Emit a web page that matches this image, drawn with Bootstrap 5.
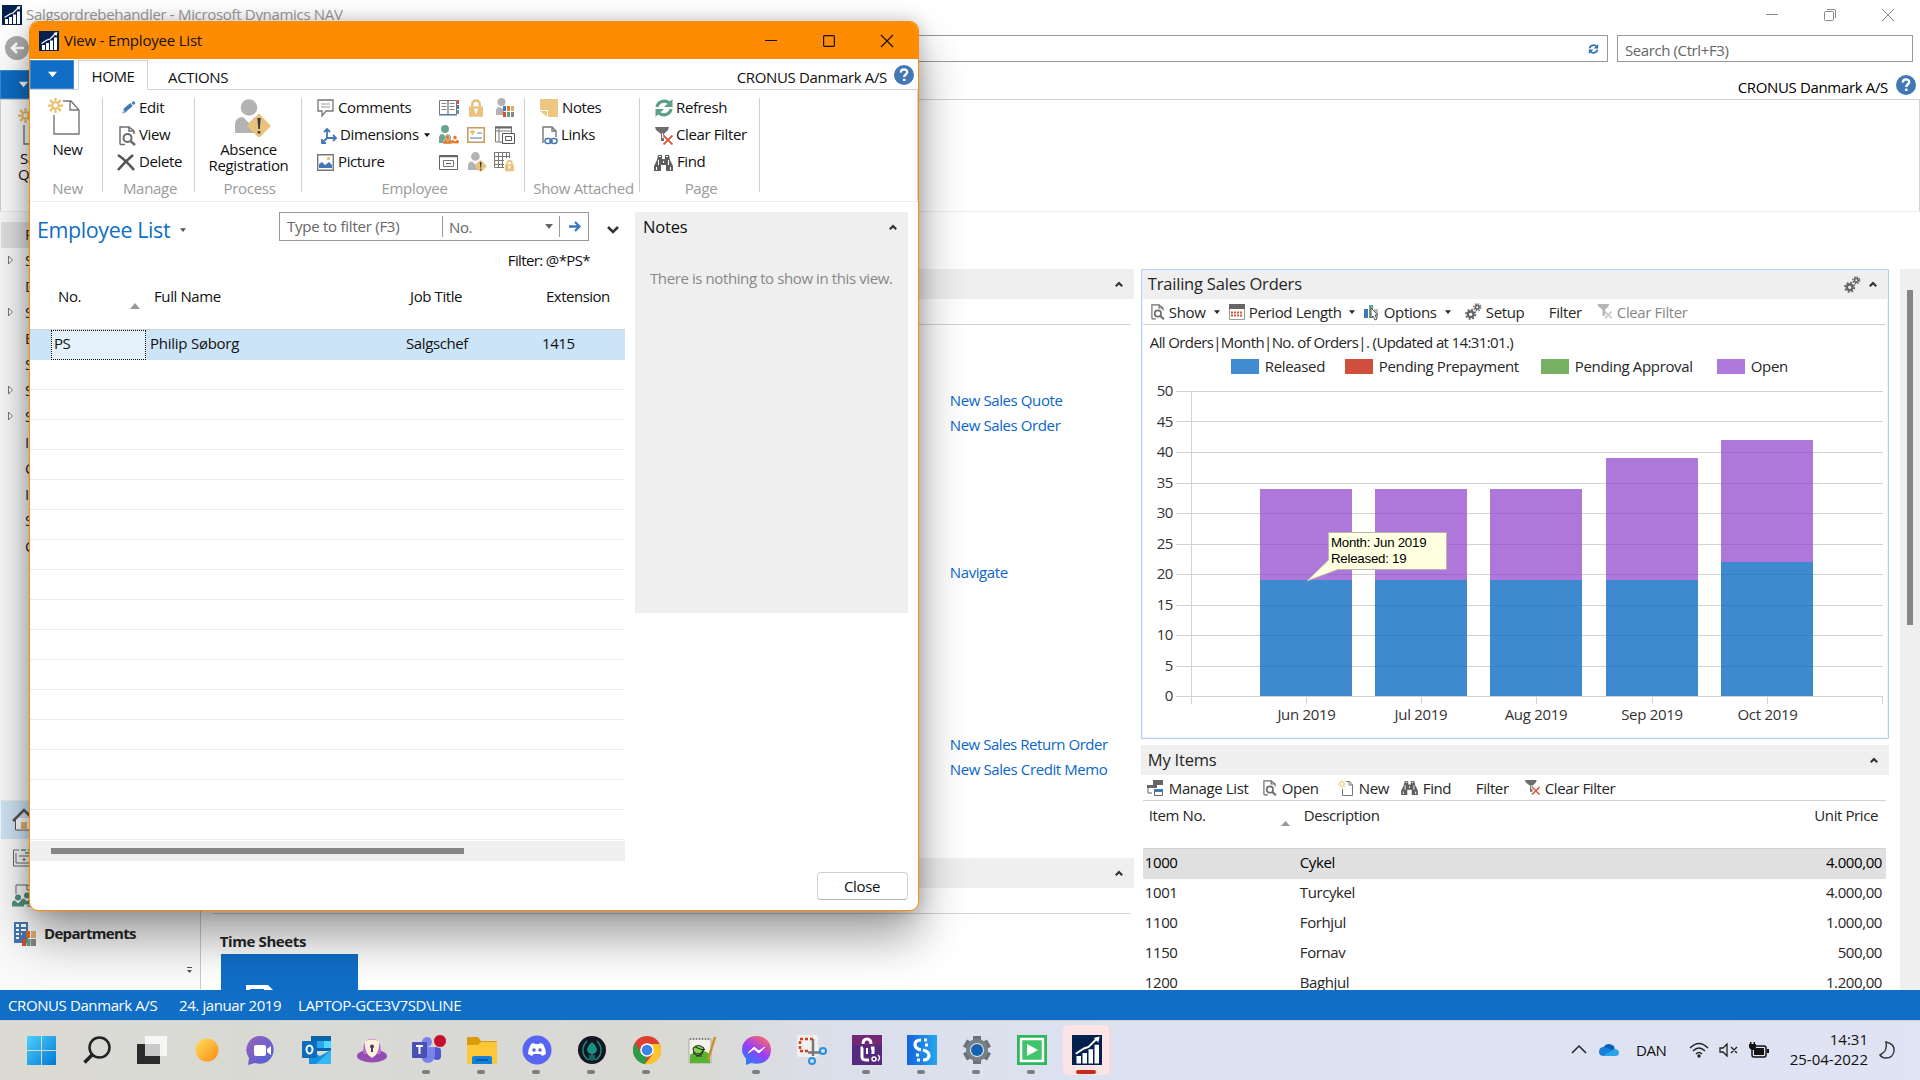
<!DOCTYPE html>
<html lang="en">
<head>
<meta charset="utf-8">
<meta name="viewport" content="width=device-width, initial-scale=1">
<title>Employee List</title>
<link href="https://cdn.jsdelivr.net/npm/bootstrap@5.3.0/dist/css/bootstrap.min.css" rel="stylesheet">
<script src="https://cdn.jsdelivr.net/npm/bootstrap@5.3.0/dist/js/bootstrap.bundle.min.js"></script>
<style>
:root{--nav:#106ec6;--line:#d2d2d2;--head:#efefef}
body{width:1920px;height:1080px;overflow:hidden;font-family:"Open Sans","Noto Sans",sans-serif;font-size:15px;letter-spacing:-.4px;line-height:20px;color:#262626;background:#fff}
svg{display:block;flex:none;overflow:visible}
span,a{white-space:nowrap}
a{color:#0a66cc;text-decoration:none}
.desk{height:990px;position:relative;overflow:hidden}
.mtitle{height:29px;padding:0 26px 0 2px;color:#999}
.mtitle>span,.dtitle>span{letter-spacing:-.32px;padding-bottom:2px}
.dtitle>span{letter-spacing:-.2px}
.wbtns{gap:46px}
.maddr{height:41px;padding:6px 7px 0 5px}
.addr{height:27px;border:1px solid #999;margin-left:6px;margin-right:9px;padding-right:8px}
.mfind{width:296px;height:27px;border:1px solid #999;padding:4px 0 0 7px;color:#666}
.mtabs{height:30px;border-bottom:1px solid var(--line);padding-right:4px}
.org{letter-spacing:-.34px}
.mtabs .org{padding-top:3px}
.filetab{background:var(--nav);border:1px solid #3b8ad6;outline:1px solid var(--nav);outline-offset:-3px;width:46px;height:29px}
.mrib{height:112px;border:1px solid var(--line);border-top:0;border-bottom-color:#eee;padding:2px 0 0 17px;color:#111}
.mrib div{width:24px;text-align:center;line-height:16px;margin:11px 0 0 -2px}
.mnav{width:201px;border-right:1px solid #c9c9c9;background:#fafafa;padding-top:10px;height:777px}
.nitem{height:26px;padding-left:7px;margin-left:1px;padding-bottom:2px}
.nitem svg{width:17px}
.nitem i{width:17px;flex:none}
.nitem.sel{background:#e1e1e1}
.nbig{height:38px;margin-left:1px;padding-left:12px;padding-bottom:1px}
.nbig.on{background:#cfe5f6}
.nbig span{letter-spacing:-.68px}
.nmore{height:36px}
.mid{padding:57px 11px 0 12px;width:940px;flex:none}
.midrule{height:26px;border-bottom:1px solid var(--line)}
.bar30{height:30px;background:var(--head)}
.mid .bar30{padding-right:11px;margin-right:-4px}
.part{width:749px;padding-top:57px}
.ptitle{font-size:16.5px;letter-spacing:-.2px}
.chartbox{height:470px;border:1px solid #b4cff5;box-shadow:inset 0 0 0 1px #eaf2fd}
.chead{height:28px;margin:1px 1px 0;background:var(--head);padding:0 10px 2px 5px}
.ptool{height:26px;display:grid;align-items:center;border-bottom:1px solid var(--line)}
.ptool>div{display:flex;align-items:center}
.ptool svg.ic{margin-right:4px}
.t-orders{grid-template-columns:79px 135px 101px 84px 48px 1fr;padding-left:7px;margin:0 2px 0 1px;letter-spacing:-.37px}
.t-items{grid-template-columns:115px 76px 63px 75px 49px 1fr;padding-left:4px;margin:0 3px 0 2px}
.t-items svg.ic{margin-right:5px}
.legend{height:15px;padding-left:89px}
.legend i{width:28px;height:15px;margin-right:6px}
.legend span{display:inline-block;letter-spacing:-.35px;padding-bottom:1px}
.ihead{height:48px;margin:0 3px 0 2px;padding:4px 8px 0 6px;border-bottom:1px solid var(--line)}
.irow{height:30px;padding:0 4px 4px 2px;margin:0 3px 0 2px}
.irow span:first-child{width:155px}
.vtrack{width:20px;background:var(--head);margin:57px 0 0 11px;padding:21px 0 0 7px}
.vthumb{width:6px;height:335px;background:#858585}
.status{height:30px;background:var(--nav);color:#fff;padding-left:8px;position:relative}
.task{height:60px;background:linear-gradient(90deg,#dbdad3 0,#d8d9d6 25%,#dad9d3 36%,#dbdfea 43%,#dce2f1 60%,#dfe3f3 100%);border-top:1px solid #ccd0d6;padding-left:14px;color:#111}
.app{width:55px;height:58px;position:relative}
.app.run:after{content:"";position:absolute;left:23px;top:49px;width:8px;height:4px;border-radius:2px;background:#7d7d7d}
.app.act:before{content:"";position:absolute;left:4px;top:4px;width:48px;height:50px;border-radius:5px;background:#fbe4e6;border-right:2px solid #f4d8da}
.app.act:after{left:17px;width:20px;background:#c42b1c}
.app svg{position:relative}
.clock{width:99px;line-height:20px;letter-spacing:0;padding-bottom:1px}
.dlg{position:absolute;left:29px;top:21px;width:890px;height:890px;border:1px solid #ff8c00;border-radius:9px;background:#fff;box-shadow:0 26px 48px rgba(0,0,0,.38),0 0 18px rgba(0,0,0,.2);overflow:hidden;color:#111}
.dtitle{height:37px;background:#ff8c00;padding:0 25px 0 9px}
.dtabs{height:31px;border-bottom:1px solid var(--line);padding-top:1px}
.dtabs>span{margin-top:7px}
.hometab{width:70px;height:30px;border:1px solid var(--line);border-bottom-color:#fff;margin-left:4px;padding-top:2px;letter-spacing:-.35px}
.drib{height:112px;border-bottom:1px solid #eee;border-right:1px solid var(--line);padding-top:8px}
.rg{position:relative;border-right:1px solid #cfcfcf;height:94px}
.rg .lab{position:absolute;left:3px;right:0;bottom:-6px;text-align:center;color:#9a9a9a;letter-spacing:-.3px}
.rtop{margin-top:-4px}
.rrow{height:27.400px;display:flex;align-items:center}
.rrow .icn{width:22px;flex:none;padding-top:1px}
.rrow>span{padding-bottom:2px;letter-spacing:-.38px}
.rgrid{display:grid;grid-template-columns:28px 29px 20px;grid-auto-rows:27.400px;align-items:center}
.efilter{width:310px;height:29px;border:1px solid #999;color:#666}
.efilter>div{height:21px;border-right:1px solid #999}
.lname{font-size:21.5px;line-height:36px;color:#106ec6;letter-spacing:-.4px}
.elist{width:595px;height:510px;background:repeating-linear-gradient(#fff 0 29px,#ebebeb 29px 30px)}
.ehead{height:49px;border-bottom:1px solid var(--line);width:595px;padding:5px 0 0 28px}
.erow{height:30px;background:#cce4f7}
.erow>span{padding-bottom:4px}
.ecell{width:95px;height:30px;border:1px dotted #111;background:#e4f1fa;padding:0 0 4px 2px;margin:0 1px 0 21px}
.hs{width:595px;height:20px;background:var(--head);padding:7px 0 0 21px;margin-top:1px}
.hs i{display:block;width:413px;height:6px;background:#858585}
.notes{width:273px;height:401px;background:var(--head);padding:5px 9px 0 8px}
.cbtn{width:91px;height:28px;border:1px solid #d0d0d0;border-bottom-color:#b5b5b5;border-radius:4px;background:#fff;padding:0 1px 1px 0;font-size:15px;line-height:20px;letter-spacing:-.35px;color:#111}
</style>
</head>
<body>
<svg width="0" height="0" class="position-absolute">
<defs>
<symbol id="nav" viewBox="0 0 20 20"><path fill="#04204f" d="M0 0h20v20H0z"/><path fill="#fff" d="M3 14h3v5H3zM7 12h3v7H7zM11 9.500h3V19h-3zM15 6.500h3V19h-3z"/><path d="M2.500 12.500 8 9l3-1 6-6" fill="none" stroke="#fff" stroke-width="1.300"/><path fill="#fff" d="m14.500 2 4-1-1 4z"/></symbol>
<symbol id="help" viewBox="0 0 20 20"><circle cx="10" cy="10" r="10" fill="#4478b4"/><path d="M6.800 7.500C6.800 3.300 13.400 3.500 13.200 7.300 13.100 9.300 10.200 9.300 10.200 12" fill="none" stroke="#fff" stroke-width="2.300"/><path fill="#fff" d="M9 13.700h2.500V16H9z"/></symbol>
<symbol id="dn" viewBox="0 0 8 5"><path d="M0 0h8L4 5z" fill="currentColor"/></symbol>
<symbol id="chev" viewBox="0 0 8 6"><path d="M.8 5.200 4 2l3.200 3.200" fill="none" stroke="#333" stroke-width="2.200"/></symbol>
<symbol id="view" viewBox="0 0 18 20"><path d="M2 18.500V1h9l5 4v3M11 1v4h5M2 18.500h5" fill="none" stroke="#6f6f6f" stroke-width="1.500"/><circle cx="9.500" cy="12" r="4" fill="none" stroke="#6a6a6a" stroke-width="2"/><path d="m12.500 15 4.500 4" stroke="#6a6a6a" stroke-width="2.500"/></symbol>
<symbol id="cf" viewBox="0 0 18 18"><path fill="#6d6d6d" d="M0 0h14l-1 3-4 4v7H6V7L1 3z"/><path fill="#fff" d="M7 6h1v5H7z"/><path d="m8.500 8.500 9 9m0-9-9 9" stroke="#fff" stroke-width="3.500"/><path d="m8.500 8.500 9 9m0-9-9 9" stroke="#d9573a" stroke-width="1.800"/></symbol>
<symbol id="cfg" viewBox="0 0 18 18"><path fill="#b5b5b5" d="M0 0h14l-1 3-4 4v7H6V7L1 3z"/><path d="m9 9 8 8m0-8-8 8" stroke="#c4c4c4" stroke-width="1.800"/></symbol>
<symbol id="find" viewBox="0 0 19 17"><path fill="#5f5f5f" d="M4 1h4v4h3V1h4l1 5 3 6v5h-7v-6H7v6H0v-5l3-6z"/><path fill="#fff" d="M5 2h2v1H5zM12 2h2v1h-2zM4 6h1v5H4zM14 6h1v5h-1zM2 13h1v3H2zM16 13h1v3h-1zM9 7h1v2H9z"/></symbol>
<symbol id="gears" viewBox="0 0 18 18"><g fill="none" stroke="#666"><circle cx="6" cy="12" r="3" stroke-width="2.400"/><circle cx="6" cy="12" r="4.900" stroke-width="2" stroke-dasharray="1.900 1.950"/><circle cx="13" cy="4.500" r="2" stroke-width="1.800"/><circle cx="13" cy="4.500" r="3.600" stroke-width="1.500" stroke-dasharray="1.500 1.330"/></g></symbol>
<symbol id="star" viewBox="0 0 16 16"><path d="M8 0v16M0 8h16M2.300 2.300l11.400 11.400M13.700 2.300 2.300 13.700" stroke="#ebc16c" stroke-width="2.400"/><circle cx="8" cy="8" r="3.200" fill="#fff" stroke="#ebc16c" stroke-width="1.800"/></symbol>
<symbol id="newdoc" viewBox="0 0 32 37"><path d="M6 17v19h25V12L23 3h-8" fill="none" stroke="#777" stroke-width="1.400"/><path d="M22 3v9h9" fill="none" stroke="#777" stroke-width="1.400"/><use href="#star" width="15" height="15"/></symbol>
<symbol id="newsm" viewBox="0 0 16 16"><path d="M4.500 9v6.500h10V5l-3-3.500H8M11 1.500V5h3.500" fill="none" stroke="#777"/><path d="M4 0v8M0 4h8M1.200 1.200l5.600 5.600M6.800 1.200 1.200 6.800" stroke="#ebc16c"/><circle cx="4" cy="4" r="1.300" fill="#fff"/></symbol>
<symbol id="absent" viewBox="0 0 36 38"><circle cx="14" cy="8.500" r="8.300" fill="#b3b3b3"/><path d="M0 34v-8c0-5 3-8 8-8l6 6 6-6c5 0 8 3 8 8v8z" fill="#b3b3b3"/><path d="M24 15.500 35 27 24 38 13 27z" fill="#ebc27d" stroke="#ebc27d" stroke-width="1.500" stroke-linejoin="round"/><path d="M22.300 19h3.500l-1 11h-1.500zM22.700 32h2.600v2.500h-2.600z" fill="#3c3c3c"/></symbol>
<symbol id="refr" viewBox="0 0 18 18"><g fill="none" stroke="currentColor" stroke-width="3.200"><path d="M2 8c1-6 9-8 13-3"/><path d="M16 10c-1 6-9 8-13 3"/></g><path fill="currentColor" d="M17.500 0v8H9zM.5 18v-8H9z"/></symbol>
<symbol id="lock" viewBox="0 0 15 19"><path d="M3.500 8V5.500a4 4 0 0 1 8 0V8" fill="none" stroke="#e9bd74" stroke-width="2.500"/><rect y="7.500" width="15" height="11.500" rx="1" fill="#ebc27d"/><path d="M6.500 10h2v5h-2zM5.500 10.500h4v2h-4z" fill="#fff"/></symbol>
<symbol id="grp" viewBox="0 0 8 8"><circle cx="4" cy="2" r="2"/><path d="M0 8V6q0-2 2-2l2 2 2-2q2 0 2 2v2z"/></symbol>
<symbol id="tri" viewBox="0 0 17 10"><path d="M.5 1v8l4-4z" fill="#fff" stroke="#777"/></symbol>
</defs>
</svg>

<main class="desk">
 <header class="mtitle d-flex align-items-center">
  <svg width="20" height="20"><use href="#nav"/></svg><span class="ms-1">Salgsordrebehandler - Microsoft Dynamics NAV</span>
  <div class="wbtns ms-auto d-flex align-items-center">
   <svg width="12" height="12"><path d="M0 5.500h12" stroke="#888"/></svg>
   <svg width="12" height="12" fill="none" stroke="#888"><rect x=".5" y="2.500" width="9" height="9" rx="1"/><path d="M3 .5h7q1.500 0 1.500 1.500v7"/></svg>
   <svg width="12" height="12"><path d="m0 0 12 12M12 0 0 12" stroke="#888"/></svg>
  </div>
 </header>
 <div class="maddr d-flex">
  <svg width="24" height="24" viewBox="0 0 24 24"><circle cx="12" cy="13" r="12" fill="#aaa"/><path d="M19 13H7m5-5-5 5 5 5" fill="none" stroke="#fff" stroke-width="2.500"/></svg>
  <div class="addr flex-grow-1 d-flex align-items-center justify-content-end"><svg width="11" height="10" color="#3273b8"><use href="#refr"/></svg></div>
  <div class="mfind">Search (Ctrl+F3)</div>
 </div>
 <div class="mtabs d-flex">
  <div class="filetab d-flex align-items-center justify-content-center text-white"><svg width="9" height="7"><use href="#dn"/></svg></div>
  <div class="ms-auto d-flex pt-1"><span class="org me-2 text-black">CRONUS Danmark A/S</span><svg width="20" height="20"><use href="#help" y="1"/></svg></div>
 </div>
 <div class="mrib"><svg width="32" height="37"><use href="#newdoc" y="6"/></svg><div>Sa<br>Qu</div></div>
 <div class="d-flex">
  <nav class="mnav d-flex flex-column">
   <div class="nitem sel d-flex align-items-center"><i></i>R</div>
   <div class="nitem d-flex align-items-center"><svg height="10"><use href="#tri"/></svg>S</div>
   <div class="nitem d-flex align-items-center"><i></i>D</div>
   <div class="nitem d-flex align-items-center"><svg height="10"><use href="#tri"/></svg>S</div>
   <div class="nitem d-flex align-items-center"><i></i>B</div>
   <div class="nitem d-flex align-items-center"><i></i>S</div>
   <div class="nitem d-flex align-items-center"><svg height="10"><use href="#tri"/></svg>S</div>
   <div class="nitem d-flex align-items-center"><svg height="10"><use href="#tri"/></svg>S</div>
   <div class="nitem d-flex align-items-center"><i></i>I</div>
   <div class="nitem d-flex align-items-center"><i></i>C</div>
   <div class="nitem d-flex align-items-center"><i></i>I</div>
   <div class="nitem d-flex align-items-center"><i></i>S</div>
   <div class="nitem d-flex align-items-center"><i></i>C</div>
   <div class="mt-auto border-top border-secondary-subtle">
    <div class="nbig on d-flex align-items-center"><svg width="24" height="22"><path d="M2.500 9v12h19V9" fill="#fff" stroke="#555"/><path d="M0 12 11 1l11 11" fill="none" stroke="#555" stroke-width="2.500"/><path fill="#dfb878" d="M8 13h6v8H8z"/></svg></div>
    <div class="nbig d-flex align-items-center"><svg width="24" height="18" fill="none" stroke="#666"><path d="M6 1H.500v16H24M3 4v10h20V4M6 7h17" /><path d="M8 1h5m2 0h6M12 4h9" stroke="#4f937c" stroke-width="1.500"/><path fill="#666" d="M10 10h2v1h-2z"/></svg></div>
    <div class="nbig d-flex align-items-center"><svg width="24" height="24"><path d="M3 10V1h12l4 4v17h-5M14 1v5h5" fill="none" stroke="#666"/><g fill="#4f937c"><use href="#grp" x="-1" y="10" width="12" height="13"/><use href="#grp" x="8" y="8" width="12" height="13"/></g></svg></div>
    <div class="nbig d-flex align-items-center fw-bold"><svg width="24" height="24"><path fill="#4478b4" d="M1 0h14v21H1z"/><path d="M3 2h3v3H3zm5 0h5v3H8zM3 7h3v2H3zm5 0h5v2H8zM3 11h3v2H3zm5 0h2v2H8zm-5 4h3v2H3z" fill="#fff"/><path fill="#4478b4" d="M9 9h4v7H9z"/><path fill="#d86a1e" d="M13 9h4v7h-4z"/><path fill="#ddb271" d="M18 9h5v7h-5z"/><path fill="#d2502f" d="M9 17h4v7H9z"/><path fill="#5e9f87" d="M13.500 17h4v7h-4z"/><path fill="#888" d="M18 17h5v7h-5z"/></svg><span style="padding:0 0 2px 7px">Departments</span></div>
    <div class="nmore d-flex justify-content-end" style="padding-right:7px"><svg width="6" height="7" style="margin-top:14px"><path d="M0 .5h5" stroke="#555"/><path d="M0 3h5L2.500 6z" fill="#555"/></svg></div>
   </div>
  </nav>
  <section class="mid">
   <div class="bar30 d-flex align-items-center justify-content-end"><svg width="8" height="6"><use href="#chev"/></svg></div>
   <div class="midrule"></div>
   <div class="d-flex flex-column" style="padding-left:737px">
    <a href="#" style="margin-top:65px">New Sales Quote</a><a href="#" style="margin-top:5px">New Sales Order</a>
    <a href="#" style="margin-top:127px">Navigate</a>
    <a href="#" style="margin-top:152px;letter-spacing:-.46px">New Sales Return Order</a><a href="#" style="margin-top:5px">New Sales Credit Memo</a>
   </div>
   <div class="bar30 d-flex align-items-center justify-content-end" style="margin-top:79px"><svg width="8" height="6"><use href="#chev"/></svg></div>
   <div class="midrule"></div>
   <div style="padding:17px 0 0 7px"><b>Time Sheets</b><div style="width:137px;height:60px;background:var(--nav);margin:3px 0 0 1px;padding:31px 0 0 25px"><svg width="32" height="26"><path d="M2 26V2h18l9 9" fill="none" stroke="#fff" stroke-width="4"/><path fill="#fff" d="M18 0h4l10 10H18z"/></svg></div></div>
  </section>
  <section class="part">
   <div class="chartbox">
    <div class="chead d-flex align-items-center"><span class="ptitle me-auto">Trailing Sales Orders</span><svg width="17" height="17"><use href="#gears"/></svg><svg width="8" height="6" class="ms-2"><use href="#chev"/></svg></div>
    <div class="ptool t-orders">
     <div><svg class="ic" width="15" height="16"><use href="#view"/></svg><span>Show</span><svg width="6" height="4" class="ms-auto" style="margin-right:9px"><use href="#dn"/></svg></div>
     <div><svg class="ic" width="16" height="16"><path fill="#666" d="M0 0h16v5H0z"/><path d="M.5 5v10.500h15V5" fill="none" stroke="#999"/><path d="M2 8.500h12M2 11.500h12" stroke="#d9573a" stroke-width="2.200" stroke-dasharray="2 1"/></svg><span>Period Length</span><svg width="6" height="4" class="ms-auto" style="margin-right:9px"><use href="#dn"/></svg></div>
     <div><svg class="ic" width="16" height="16"><path fill="#4478b4" d="M0 5h4v9H0z"/><path fill="#6aa68f" d="M5 1h4v13H5z"/><path fill="#bbb" d="M10 5h4v9h-4z"/><path fill="#fff" stroke="#555" d="M7 4v10l2-2 2 4 2-1-2-4h3z"/></svg><span>Options</span><svg width="6" height="4" class="ms-auto" style="margin-right:14px"><use href="#dn"/></svg></div>
     <div><svg class="ic" width="17" height="17"><use href="#gears"/></svg><span>Setup</span></div>
     <div><span>Filter</span></div>
     <div style="color:#888"><svg class="ic" width="16" height="15"><use href="#cfg"/></svg><span>Clear Filter</span></div>
    </div>
    <div style="padding:7px 0 0 8px;height:34px;letter-spacing:-.62px">All Orders|Month|No. of Orders|. (Updated at 14:31:01.)</div>
    <div class="legend d-flex align-items-center"><i style="background:#408bd1"></i><span style="width:80px">Released</span><i style="background:#cf4f3c"></i><span style="width:162px">Pending Prepayment</span><i style="background:#77b062"></i><span style="width:142px">Pending Approval</span><i style="background:#af78dc"></i><span>Open</span></div>
    <svg width="746" height="362" viewBox="1142 374 746 362" font-size="15" fill="#333">
     <path d="M1176 391.500h707M1176 421.500h707M1176 452.500h707M1176 483.500h707M1176 513.500h707M1176 544.500h707M1176 574.500h707M1176 605.500h707M1176 635.500h707M1176 666.500h707M1176 696.500h707M1191.500 391v313M1306.500 696v8M1421.500 696v8M1536.500 696v8M1652.500 696v8M1767.500 696v8M1882.500 696v8" stroke="#d2d2d2" fill="none"/>
     <g fill="#8c3fca" fill-opacity=".7"><path d="M1260 489h92v91h-92zM1375 489h92v91h-92zM1490 489h92v91h-92zM1606 458h92v122h-92zM1721 440h92v122h-92z"/></g>
     <path fill="#0f6dc2" fill-opacity=".8" d="M1260 580h92v116h-92zM1375 580h92v116h-92zM1490 580h92v116h-92zM1606 580h92v116h-92zM1721 562h92v134h-92z"/>
     <g text-anchor="end"><text x="1173" y="396">50</text><text x="1173" y="427">45</text><text x="1173" y="457">40</text><text x="1173" y="488">35</text><text x="1173" y="518">30</text><text x="1173" y="549">25</text><text x="1173" y="579">20</text><text x="1173" y="610">15</text><text x="1173" y="640">10</text><text x="1173" y="671">5</text><text x="1173" y="701">0</text></g>
     <g text-anchor="middle" letter-spacing="-.3"><text x="1306.500" y="720">Jun 2019</text><text x="1421" y="720">Jul 2019</text><text x="1536" y="720">Aug 2019</text><text x="1652" y="720">Sep 2019</text><text x="1767.500" y="720">Oct 2019</text></g>
     <path d="M1328.500 532.500h118v37H1338L1307 581l21.500-21z" fill="#ffffe1" stroke="#b8b8a8"/>
     <g fill="#000" font-family="Liberation Sans, sans-serif" font-size="13.300" letter-spacing="-.25"><text x="1331" y="547">Month: Jun 2019</text><text x="1331" y="563">Released: 19</text></g>
    </svg>
   </div>
   <div class="bar30 d-flex align-items-center" style="margin-top:6px;padding:0 11px 0 7px"><span class="ptitle me-auto">My Items</span><svg width="8" height="6"><use href="#chev"/></svg></div>
   <div class="ptool t-items">
    <div><svg class="ic" width="17" height="16"><path fill="#666" d="M6 0h10v5H6zM0 5h10v3H0z"/><path d="M1 5v8h4" fill="none" stroke="#666"/><path fill="#4478b4" d="M7 9h9v3H7z"/><path d="M7.500 12v3.500h8V12" fill="none" stroke="#666"/></svg><span>Manage List</span></div>
    <div><svg class="ic" width="15" height="16"><use href="#view"/></svg><span>Open</span></div>
    <div><svg class="ic" width="16" height="16"><use href="#newsm"/></svg><span>New</span></div>
    <div><svg class="ic" width="17" height="15"><use href="#find"/></svg><span>Find</span></div>
    <div><span>Filter</span></div>
    <div><svg class="ic" width="15" height="15"><use href="#cf"/></svg><span>Clear Filter</span></div>
   </div>
   <div class="ihead d-flex"><span style="width:132px">Item No.</span><svg width="9" height="5" style="margin:16px 14px 0 0"><path d="M0 5h9L4.500 0z" fill="#999"/></svg><span>Description</span><span class="ms-auto">Unit Price</span></div>
   <div class="irow d-flex align-items-center text-black" style="background:#e0e0e0"><span>1000</span><span>Cykel</span><span class="ms-auto">4.000,00</span></div>
   <div class="irow d-flex align-items-center"><span>1001</span><span>Turcykel</span><span class="ms-auto">4.000,00</span></div>
   <div class="irow d-flex align-items-center"><span>1100</span><span>Forhjul</span><span class="ms-auto">1.000,00</span></div>
   <div class="irow d-flex align-items-center"><span>1150</span><span>Fornav</span><span class="ms-auto">500,00</span></div>
   <div class="irow d-flex align-items-center"><span>1200</span><span>Baghjul</span><span class="ms-auto">1.200,00</span></div>
  </section>
  <div class="vtrack"><div class="vthumb"></div></div>
 </div>

 <div class="dlg d-flex flex-column">
  <div class="dtitle d-flex align-items-center">
   <svg width="20" height="20"><use href="#nav"/></svg><span style="margin-left:5px">View - Employee List</span>
   <div class="wbtns ms-auto d-flex align-items-center"><svg width="12" height="12"><path d="M0 5.500h12" stroke="#111"/></svg><svg width="12" height="12"><rect x=".6" y=".6" width="10.800" height="10.800" rx="1" fill="none" stroke="#111" stroke-width="1.200"/></svg><svg width="12" height="12"><path d="m0 0 12 12M12 0 0 12" stroke="#111" stroke-width="1.200"/></svg></div>
  </div>
  <div class="dtabs d-flex">
   <div class="filetab d-flex align-items-center justify-content-center text-white" style="width:44px"><svg width="9" height="7"><use href="#dn"/></svg></div>
   <div class="hometab d-flex align-items-center justify-content-center">HOME</div>
   <span class="org" style="margin-left:20px">ACTIONS</span>
   <span class="org ms-auto" style="margin-right:7px">CRONUS Danmark A/S</span><svg width="20" height="20" style="margin:5px 4px 0 0"><use href="#help"/></svg>
  </div>
  <div class="drib d-flex">
   <div class="rg d-flex flex-column align-items-center" style="width:73px;padding-left:3px"><svg width="32" height="37" class="me-2"><use href="#newdoc"/></svg><span style="margin-top:4px">New</span><span class="lab">New</span></div>
   <div class="rg" style="width:92px;padding-left:14px"><div class="rtop">
    <div class="rrow"><div class="icn"><svg width="16" height="14" class="ms-1"><path d="m1 13 2-5 3 3z" fill="#8aa9cc"/><path d="m3.500 9.500 7-6" stroke="#4478b4" stroke-width="3.800"/><path d="m11.500 3 2-2" stroke="#4478b4" stroke-width="3"/></svg></div><span>Edit</span></div>
    <div class="rrow"><div class="icn"><svg width="18" height="20" class="ms-0"><use href="#view" x="1"/></svg></div><span>View</span></div>
    <div class="rrow"><div class="icn"><svg width="18" height="17"><path d="M1 1c6 4 11 9 16 15M16 1C10 6 6 10 1 16" fill="none" stroke="#555" stroke-width="2.600"/></svg></div><span>Delete</span></div></div>
    <span class="lab">Manage</span></div>
   <div class="rg d-flex flex-column align-items-center text-center" style="width:107px;padding-left:1px"><svg width="36" height="38" class="ms-2"><use href="#absent" y="1"/></svg><div style="line-height:16px;margin-top:5px;letter-spacing:-.33px">Absence<br>Registration</div><span class="lab">Process</span></div>
   <div class="rg" style="width:223px;padding-left:15px"><div class="d-flex rtop">
    <div style="width:122px">
     <div class="rrow"><div class="icn"><svg width="17" height="18"><path d="M1 1h15v11H9l-4 5v-5H1z" fill="none" stroke="#777" stroke-width="1.300"/><path d="M4 5h9M4 8h9" stroke="#999"/></svg></div><span style="margin-left:-1px">Comments</span></div>
     <div class="rrow ps-1"><div class="icn" style="width:20px"><svg width="16" height="16" fill="none" stroke="#4478b4" stroke-width="1.800"><path d="M6 1v9h9M6 10l-5 5M3 4l3-3 3 3M12 7l3 3-3 3M1 11v4h4"/></svg></div><span style="margin-left:-1px">Dimensions</span><svg width="6" height="4" style="margin-left:5px"><use href="#dn"/></svg></div>
     <div class="rrow"><div class="icn"><svg width="17" height="17"><path d="M.7.7h15.600v15.600H.7z" fill="#fff" stroke="#777" stroke-width="1.400"/><path d="M2 14V10l3-2 3 3 4-3 3 3v3z" fill="#4478b4"/><path fill="#ebc27d" d="M10 3h3v3h-3z"/></svg></div><span style="margin-left:-1px">Picture</span></div>
    </div>
    <div class="rgrid">
     <svg width="20" height="17"><path d="M.5 1.500h17v14H.5z" fill="#fff" stroke="#777"/><path d="M9 1v15" stroke="#555"/><path d="M2.500 4.500h5m-5 3h5m-5 3h5m3-6h5m-5 3h5m-5 3h5" stroke="#888"/><path d="M0 16h18" stroke="#4478b4"/><path fill="#d9573a" d="M18 1h2v4h-2z"/><path fill="#4478b4" d="M18 6h2v4h-2z"/><path fill="#5e9f87" d="M18 11h2v4h-2z"/></svg>
     <svg width="14" height="18" style="margin-left:2px"><use href="#lock"/></svg>
     <svg width="18" height="19"><g fill="#b3b3b3"><circle cx="5.500" cy="4" r="4"/><path d="M0 17v-4q0-4 4-4l4 3v5z"/></g><path fill="#4478b4" d="M7 8h3v5H7z"/><path fill="#e07b2c" d="M11 8h3v5h-3z"/><path fill="#ddb271" d="M15 8h3v5h-3z"/><path fill="#d2502f" d="M7 14h3v5H7z"/><path fill="#5e9f87" d="M11 14h3v5h-3z"/><path fill="#888" d="M15 14h3v5h-3z"/></svg>
     <svg width="20" height="20"><circle cx="6" cy="4" r="4" fill="#6aa68f"/><path d="M0 18v-5q0-4 4-4l2 2 2-2q4 0 4 4v5z" fill="#6aa68f"/><g fill="#e4772b" stroke="#fff" stroke-width=".4"><use href="#grp" x="4" y="9" width="9" height="11"/><use href="#grp" x="12" y="9" width="8" height="11"/></g></svg>
     <svg width="18" height="16"><rect x=".8" y=".8" width="16.400" height="14.400" fill="#fff" stroke="#c99a57" stroke-width="1.500"/><path d="M3 5h5M5.500 3v5" stroke="#ebc27d" stroke-width="2"/><path d="M3 11h12" stroke="#4478b4"/><path d="M10 6h5" stroke="#777"/></svg>
     <svg width="20" height="18" style="margin-left:-1px"><path d="M.5 1h16v15H.5zM.5 5h16M4 1v15" fill="none" stroke="#777"/><path d="M0 1.500h17" stroke="#666" stroke-width="2"/><path d="M7.500 7.500h12v10h-12z" fill="#fff" stroke="#555"/><path d="M10.500 10.500h6v4h-6z" fill="none" stroke="#555"/></svg>
     <svg width="19" height="15"><path d="M.5.5h18v14H.5z" fill="#fff" stroke="#666"/><path d="M0 1.500h19" stroke="#666" stroke-width="1.500"/><path d="M4.500 5.500h10v6h-10z" fill="none" stroke="#777"/><path d="M7 8.500h5" stroke="#666"/></svg>
     <svg width="19" height="20" style="margin-left:1px"><use href="#absent"/></svg>
     <svg width="20" height="20" style="margin-left:-2px"><path d="M.5.5h15v15H.5zM.5 4.500h15m-15 4h15m-15 4h15M4.500 0v16m4-16v16m4-16v16" fill="none" stroke="#777"/><path fill="#fff" d="M10 6h10v14H10z"/><svg x="11" y="7" width="9" height="13"><use href="#lock"/></svg></svg>
    </div></div>
    <span class="lab">Employee</span></div>
   <div class="rg" style="width:115px;padding-left:15px"><div class="rtop">
    <div class="rrow"><div class="icn"><svg width="18" height="18"><path d="M0 0h18v18H8v-7H0z" fill="#edc67f"/><path d="M0 12h7v6z" fill="#edc67f"/></svg></div><span>Notes</span></div>
    <div class="rrow"><div class="icn"><svg width="17" height="19" style="margin-left:2px"><path d="M1 17V1h9l4 4v6M10 1v4h4" fill="none" stroke="#777" stroke-width="1.400"/><g fill="none" stroke="#4478b4" stroke-width="1.500"><rect x="3" y="12.500" width="6" height="5" rx="2.500"/><rect x="9" y="12.500" width="6" height="5" rx="2.500"/><path d="M7 15h4"/></g></svg></div><span style="margin-left:-1px">Links</span></div></div>
    <span class="lab">Show Attached</span></div>
   <div class="rg" style="width:120px;padding-left:15px"><div class="rtop">
    <div class="rrow"><div class="icn"><svg width="18" height="18" color="#5e9f87"><use href="#refr"/></svg></div><span style="margin-left:-1px">Refresh</span></div>
    <div class="rrow"><div class="icn"><svg width="18" height="18"><use href="#cf"/></svg></div><span style="margin-left:-1px">Clear Filter</span></div>
    <div class="rrow"><div class="icn"><svg width="19" height="17" style="margin-left:-1px"><use href="#find"/></svg></div><span>Find</span></div></div>
    <span class="lab">Page</span></div>
  </div>
  <div class="d-flex" style="padding-top:10px">
   <div style="width:595px;flex:none">
    <div class="d-flex align-items-start" style="height:39px;padding-left:7px">
     <span class="lname">Employee List</span><svg width="6" height="4" style="margin:16px 0 0 10px" color="#555"><use href="#dn"/></svg>
     <div class="efilter d-flex align-items-center ms-auto" style="margin-right:18px"><div style="width:163px;padding-left:7px;letter-spacing:-.25px">Type to filter (F3)</div><div class="d-flex align-items-center justify-content-between" style="width:117px;padding:0 6px"><span>No.</span><svg width="8" height="5"><use href="#dn"/></svg></div><svg width="12" height="11" style="margin-left:9px"><path d="M0 5.500h9M6 1l4.500 4.500L6 10" fill="none" stroke="#3b78bd" stroke-width="2.300"/></svg></div>
     <svg width="12" height="8" style="margin:14px 6px 0 0"><path d="m1 1 5 5 5-5" fill="none" stroke="#333" stroke-width="2.500"/></svg>
    </div>
    <div class="text-end" style="height:30px;padding-right:35px;margin-top:-1px;margin-bottom:1px;letter-spacing:-.62px">Filter: @*PS*</div>
    <div class="ehead d-flex"><span style="width:72px">No.</span><svg width="10" height="6" style="margin:17px 14px 0 0"><path d="M0 6h10L5 0z" fill="#999"/></svg><span style="width:256px">Full Name</span><span style="width:136px">Job Title</span><span style="letter-spacing:-.5px">Extension</span></div>
    <div class="elist"><div class="erow d-flex align-items-center"><div class="ecell d-flex align-items-center">PS</div><span style="padding-left:3px;width:259px;letter-spacing:-.25px">Philip Søborg</span><span style="width:136px">Salgschef</span><span>1415</span></div></div>
    <div class="hs"><i></i></div>
   </div>
   <div style="margin-left:10px"><div class="notes"><div class="d-flex align-items-center justify-content-between"><span class="ptitle">Notes</span><svg width="8" height="6" style="margin-right:2px"><use href="#chev"/></svg></div><div style="margin:31px 0 0 7px;color:#888">There is nothing to show in this view.</div></div></div>
  </div>
  <div class="d-flex justify-content-end" style="padding:11px 10px 0 0"><button class="btn cbtn">Close</button></div>
 </div>
</main>

<footer class="status d-flex align-items-center"><span style="width:171px">CRONUS Danmark A/S</span><span style="width:119px">24. januar 2019</span><span>LAPTOP-GCE3V7SD\LINE</span></footer>
<div class="task d-flex">
 <div class="app d-flex align-items-center justify-content-center"><svg width="29" height="29"><defs><linearGradient id="wg" x2="1" y2="1"><stop stop-color="#4fd0fb"/><stop offset="1" stop-color="#0078d4"/></linearGradient></defs><path fill="url(#wg)" d="M0 0h14v14H0zM15 0h14v14H15zM0 15h14v14H0zM15 15h14v14H15z"/></svg></div>
 <div class="app d-flex align-items-center justify-content-center"><svg width="28" height="28"><circle cx="16.500" cy="11.500" r="10" fill="none" stroke="#222" stroke-width="2.500"/><path d="m9 19-7.500 7.500" stroke="#222" stroke-width="3.500"/></svg></div>
 <div class="app d-flex align-items-center justify-content-center"><svg width="30" height="28"><path fill="#2b2b2b" d="M0 8h23v20H0z"/><path fill="#fff" fill-opacity=".75" d="M8 0h22v20H8z"/></svg></div>
 <div class="app d-flex align-items-center justify-content-center"><svg width="24" height="24"><defs><linearGradient id="og" x2="1" y2="1"><stop stop-color="#ffdf5e"/><stop offset="1" stop-color="#f98b12"/></linearGradient></defs><circle cx="12" cy="12" r="11.500" fill="url(#og)"/></svg></div>
 <div class="app d-flex align-items-center justify-content-center"><svg width="30" height="29"><defs><linearGradient id="cg" x2="1" y2="1"><stop stop-color="#9a62b8"/><stop offset="1" stop-color="#4a62d8"/></linearGradient></defs><path fill="url(#cg)" d="M15 0a14 14 0 1 1-7 27L1 29l1-7A14 14 0 0 1 15 0z"/><rect x="7" y="9" width="12" height="11" rx="2" fill="#fff"/><path fill="#fff" d="m20 13 4-3v9l-4-3z"/></svg></div>
 <div class="app d-flex align-items-center justify-content-center"><svg width="30" height="28"><path fill="#0a64ad" d="M9 0h20v15H9z"/><path fill="#28a8ea" d="M15 5h7v7h-7z"/><path fill="#50d9ff" d="M22 5h7v7h-7z"/><path fill="#1490df" d="M7 14l11 6 11-6v14H7z"/><path fill="#35b8f1" d="m29 14-15 14h15z"/><rect y="5" width="15" height="17" rx="1" fill="#0f6cbd"/><ellipse cx="7.500" cy="13.500" rx="3" ry="4" fill="none" stroke="#fff" stroke-width="2"/></svg></div>
 <div class="app d-flex align-items-center justify-content-center"><svg width="30" height="25"><ellipse cx="15" cy="18" rx="15" ry="6.500" fill="#944db3"/><path fill="#b46ace" d="M6 16C6 4 9 1 15 1s9 3 9 15z"/><path d="M8 3q7-3 14 0 1 13-7 17Q7 16 8 3z" fill="#fcf1d8"/><circle cx="15" cy="8.500" r="2" fill="#533669"/><path fill="#533669" d="M14 9h2v5h-2z"/></svg></div>
 <div class="app run d-flex align-items-center justify-content-center"><svg width="30" height="28"><circle cx="15" cy="6" r="5" fill="#7b83eb"/><rect x="21" y="11" width="8" height="13" rx="4" fill="#4f59cb"/><path fill="#7b83eb" d="M9 11h14v8a7 8 0 0 1-14 0z"/><rect y="6" width="15" height="16" rx="1" fill="#4a51b5"/><path d="M4 10h7M7.500 10v8" stroke="#fff" stroke-width="2"/><circle cx="28" cy="5" r="6.500" fill="#c50f2e" stroke="#ddd"/></svg></div>
 <div class="app run d-flex align-items-center justify-content-center"><svg width="30" height="28"><path fill="#dc9c0a" d="M0 1h11l3 4H30v8H0z"/><path fill="#fcc837" d="M0 9h11l3-3h16v22H0z"/><path fill="#1481d8" d="M5 28v-6q0-2 2-2h16q2 0 2 2v6z"/><path d="M9 24h12" stroke="#0b4f94" stroke-width="1.500"/></svg></div>
 <div class="app run d-flex align-items-center justify-content-center"><svg width="30" height="30"><circle cx="15" cy="15" r="14.500" fill="#5865f2"/><path fill="#fff" d="M9 9l3-1 1 1h4l1-1 3 1q3 5 3 10l-4 2-1.500-2h-7L10 21l-4-2q0-5 3-10z"/><circle cx="12" cy="15" r="1.800" fill="#5865f2"/><circle cx="18" cy="15" r="1.800" fill="#5865f2"/></svg></div>
 <div class="app run d-flex align-items-center justify-content-center"><svg width="28" height="28"><circle cx="14" cy="14" r="14" fill="#121722"/><g fill="none" stroke="#179287" stroke-width="1.300"><path d="M11 24C4 21 3 11 9 5M17 24c7-3 8-13 2-19M12 19v5M16 19v5M14 17v8"/></g><path d="M14 6q4 3 5 8-1 4-5 4t-5-4q1-5 5-8z" fill="#179287"/></svg></div>
 <div class="app run d-flex align-items-center justify-content-center"><svg width="28" height="28"><circle cx="14" cy="14" r="14" fill="#dd3f31"/><path fill="#2b9d47" d="M2 7 8 17l6 4-2 7A14 14 0 0 1 2 7z"/><path fill="#fcc52b" d="M14 8h12.700A14 14 0 0 1 12 28l8-10z"/><circle cx="14" cy="14" r="6.800" fill="#fff"/><circle cx="14" cy="14" r="5.300" fill="#3b82ec"/></svg></div>
 <div class="app d-flex align-items-center justify-content-center"><svg width="28" height="28"><path fill="#f4f4ed" stroke="#aaa" d="M1 3h22v24H1z"/><path d="M2 3h20" stroke="#777" stroke-width="2" stroke-dasharray="1 2"/><path fill="#57b42e" d="M2 19q10-8 20-1v9H2z"/><path d="M5 12q5-5 11 0l-2 6q-4 3-8 0z" fill="#86d154" stroke="#222"/><path d="M6 16q5 5 11-3M7 11l8 3M8 20h6" fill="none" stroke="#222"/><path d="m27 1-7 23" stroke="#c89033" stroke-width="2.500"/></svg></div>
 <div class="app run d-flex align-items-center justify-content-center"><svg width="29" height="29"><defs><linearGradient id="mg" x1=".2" y1="1" x2=".8" y2="0"><stop stop-color="#1988ff"/><stop offset=".5" stop-color="#9a3cf8"/><stop offset="1" stop-color="#ff6d68"/></linearGradient></defs><path fill="url(#mg)" d="M14.500 0C6 0 0 6 0 13.500c0 4 2 7 4 9V29l5-2c13 3 20-4 20-13.500C29 6 23 0 14.500 0z"/><path d="m6 17 6-6 5 4 6-4-6 6-5-4z" fill="#fff" stroke="#fff"/></svg></div>
 <div class="app d-flex align-items-center justify-content-center"><svg width="30" height="30"><rect width="21" height="22" rx="2" fill="#f0f0f0"/><path d="M16 4H3v12h8" fill="none" stroke="#d83b15" stroke-width="2.500" stroke-dasharray="3 2"/><path d="M16 4v17M11 17.500h12" stroke="#777" stroke-width="2.500"/><g fill="none" stroke="#2792dc" stroke-width="2"><circle cx="26" cy="16" r="3"/><circle cx="15" cy="26" r="3"/></g></svg></div>
 <div class="app run d-flex align-items-center justify-content-center"><svg width="30" height="30"><path fill="#742774" d="M0 0h30v30H0z"/><path fill="#552a7e" d="M0 10h30v20H0z"/><path d="M11 9q0-5 4-5t4 5M11 13h-1v9q0 3 5 3h2M19 13h2v6" fill="none" stroke="#fff" stroke-width="3"/><path d="M15 13v6" stroke="#fff" stroke-width="2"/><g fill="none" stroke="#fff" stroke-width="1.500"><circle cx="22" cy="24" r="2"/><path d="M26 20q3 2 0 6"/></g></svg></div>
 <div class="app run d-flex align-items-center justify-content-center"><svg width="30" height="30"><defs><linearGradient id="sg" x2="1"><stop stop-color="#1264dc"/><stop offset="1" stop-color="#25a6ed"/></linearGradient></defs><path fill="url(#sg)" d="M0 0h30v30H0z"/><path d="M14 5q-6 0-6 4.500 0 4 6 5.500M16 15q6 1.500 6 5.500 0 4.500-6 4.500" fill="none" stroke="#fff" stroke-width="3.200"/><path d="M17 5h3M10 25h3M18 10h3M9 20h3" stroke="#fff" stroke-width="3"/></svg></div>
 <div class="app run d-flex align-items-center justify-content-center"><svg width="30" height="30"><g stroke="#6c7378" stroke-width="8"><path d="M15 1v28M3 8l24 14M27 8 3 22"/></g><circle cx="15" cy="15" r="11" fill="#788087"/><circle cx="15" cy="15" r="7" fill="#dfe7f1"/><circle cx="15" cy="15" r="6" fill="#1463ad"/></svg></div>
 <div class="app run d-flex align-items-center justify-content-center"><svg width="30" height="30"><path fill="#2cb75a" d="M0 0h30v30H0z"/><path d="M4 4h22v22H4z" fill="#41c56c" stroke="#fff" stroke-width="2.500"/><path fill="#fff" d="m10 9 11 6-11 6z"/></svg></div>
 <div class="app run act d-flex align-items-center justify-content-center"><svg width="30" height="30"><use href="#nav"/></svg></div>
 <div class="ms-auto d-flex align-items-center" style="padding:0 24px 2px 0">
  <svg width="16" height="9"><path d="m1 8 7-7 7 7" fill="none" stroke="#222" stroke-width="1.500"/></svg>
  <svg width="20" height="13" style="margin-left:12px"><path fill="#0a62b8" d="M4 5q4-7 11-2l1 4-9 4z"/><path fill="#1581d8" d="M5 4q-5 0-5 5 0 4 5 4l8-6z"/><path fill="#29a3ea" d="M4 13 15 6q5 0 5 4 0 3-4 3z"/></svg>
  <span style="margin-left:17px;width:53px">DAN</span>
  <svg width="20" height="16" fill="none" stroke="#222" stroke-width="1.400"><path d="M1 6q9-9 18 0M4 9q6-6 12 0M7 12q3-3 6 0"/><circle cx="10" cy="14" r="1" fill="#222"/></svg>
  <svg width="20" height="14" style="margin-left:10px" fill="none" stroke="#222" stroke-width="1.300"><path d="M1 5h3l4-4v12L4 9H1zM12 4l6 6m0-6-6 6"/></svg>
  <svg width="20" height="16" style="margin-left:10px"><rect x="3" y="4" width="14" height="11" rx="2" fill="none" stroke="#111" stroke-width="1.500"/><path fill="#111" d="M5 6h10v7H5zM18 7h2v4h-2zM0 2h7v3q0 3-3 3t-4-3zM1 0h1.500v3H1zM4.500 0H6v3H4.500z"/></svg>
  <div class="clock text-end">14:31<br>25-04-2022</div>
  <svg width="17" height="18" style="margin-left:11px"><path d="M7 1q9 2 8 9t-8 7q-4 0-6-3 8-4 6-13z" fill="none" stroke="#333" stroke-width="1.400"/></svg>
 </div>
</div>
</body>
</html>
